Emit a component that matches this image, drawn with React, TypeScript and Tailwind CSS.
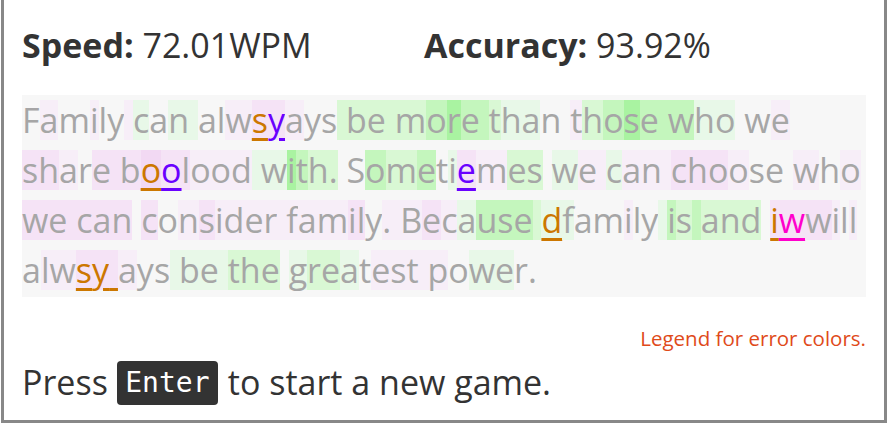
import React from "react";

const BG: Record<string, string> = {
  ".": "",
  a: "bg-[#f7eef8]",
  b: "bg-[#f5e3f6]",
  c: "bg-[#f2d9f3]",
  "1": "bg-[#e8f8e8]",
  "2": "bg-[#d9f8d4]",
  "3": "bg-[#c4f6bd]",
  "4": "bg-[#a9f3a1]",
};

const ERR: Record<string, string> = {
  ".": "",
  o: "text-[#cc7700] underline decoration-[3px] underline-offset-[5px]",
  p: "text-[#6a00ff] underline decoration-[3px] underline-offset-[5px]",
  m: "text-[#ff00cc] underline decoration-[3px] underline-offset-[5px]",
};

type Seg = [string, string, string?];

const LINES: Seg[][] = [
  [
    ["Family", ".a.a.."], [" ", "a"], ["can", "1.1"], [" ", "1"],
    ["alwsyays", "..abba..", "...op..."], [" ", "2"], ["be", "22"], [" ", "2"],
    ["more", "2343"], [" ", "3"], ["than", "211."], [" ", "."],
    ["those", "a2343"], [" ", "3"], ["who", "311"], [" ", "."], ["we", ".a"],
  ],
  [
    ["share", "bba.b"], [" ", "b"], ["boolood", "bcbbaaa", ".op...."], [" ", "1"],
    ["with.", "14322"], [" ", "."], ["Sometiemes", ".323.1ba22", "......p..."], [" ", "."],
    ["we", "1a"], [" ", "a"], ["can", "1aa"], [" ", "a"], ["choose", "bbba.."], [" ", "."],
    ["who", "a.a"],
  ],
  [
    ["we", "bb"], [" ", "b"], ["can", "bbb"], [" ", "."], ["consider", "b.abaaaa"], [" ", "a"],
    ["family.", "aaabb.a"], [" ", "a"], ["Because", "aba1333"], [" ", "2"],
    ["dfamily", "11..a..", "o......"], [" ", "1"], ["is", "32"], [" ", "3"], ["and", "222"],
    [" ", "."], ["iwwill", "bbba.a", "om...."],
  ],
  [
    ["alwsy", ".aabb", "...oo"], [" ", "b", "o"], ["ays", "a.."], [" ", "1"], ["be", "11"],
    [" ", "1"], ["the", "222"], [" ", "."], ["greatest", "1221.aaa"], [" ", "a"],
    ["power.", "a.11.."],
  ],
];

function Line({ segs }: { segs: Seg[] }) {
  const chars: React.ReactNode[] = [];
  segs.forEach(([text, bg, err], si) => {
    for (let i = 0; i < text.length; i++) {
      const b = BG[bg[i] ?? "."] ?? "";
      const e = err ? ERR[err[i] ?? "."] ?? "" : "";
      chars.push(
        <span key={`${si}-${i}`} className={`inline-block h-[40px] leading-[40px] align-top ${b} ${e}`}>
          {text[i]}
        </span>
      );
    }
  });
  return <div className="h-[50px] pt-[5px] whitespace-pre">{chars}</div>;
}

export default function App() {
  return (
    <div className="w-[889px] h-[425px] bg-white overflow-hidden" style={{ fontFamily: '"Open Sans", "Noto Sans", sans-serif' }}>
      <div className="ml-[1px] w-[886px] h-[423px] border-x-[3px] border-b-[3px] border-[#888888] pl-[18px] pr-[18px] flex flex-col">
        <div className="h-[95px] pb-[4px] flex items-center text-[34px] text-[#333333]">
          <div className="w-[402px]">
            <span className="font-bold">Speed:</span> 72.01WPM
          </div>
          <div>
            <span className="font-bold">Accuracy:</span> 93.92%
          </div>
        </div>
        <div className="h-[202px] bg-[#f7f7f7] text-[34px] text-[#a6a6a6]">
          {LINES.map((l, i) => (
            <Line key={i} segs={l} />
          ))}
        </div>
        <div className="mt-[28px] text-right text-[20.5px] leading-[26px] text-[#e04a1a]">Legend for error colors.</div>
        <div className="mt-[6px] flex items-center text-[34px] text-[#333333]">
          <span>Press</span>
          <span className="ml-[9px] mr-[10px] inline-flex items-center justify-center w-[101px] h-[44px] rounded-[4px] bg-[#333333] text-white" style={{ fontFamily: '"DejaVu Sans Mono", monospace', fontSize: "28px" }}>
            Enter
          </span>
          <span>to start a new game.</span>
        </div>
      </div>
    </div>
  );
}
